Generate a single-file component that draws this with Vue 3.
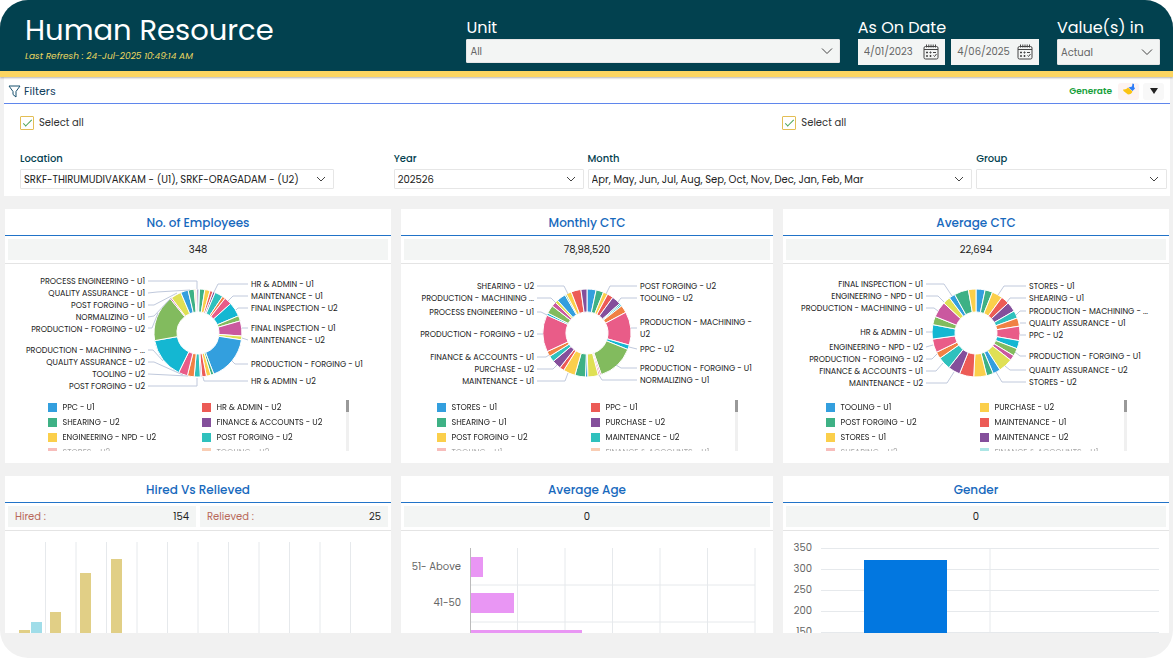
<script setup>
import { ref } from "vue";

const unit = ref("All");
const valuesIn = ref("Actual");
const dates = ref([
  { id: "date-from", hint: "Start date", value: "4/01/2023" },
  { id: "date-to", hint: "End date", value: "4/06/2025" },
]);
const allLocations = ref(true);
const allMonths = ref(true);

const filters = ref([
  { id: "location", label: "Location", value: "SRKF-THIRUMUDIVAKKAM - (U1), SRKF-ORAGADAM - (U2)" },
  { id: "year", label: "Year", value: "202526" },
  { id: "month", label: "Month", value: "Apr, May, Jun, Jul, Aug, Sep, Oct, Nov, Dec, Jan, Feb, Mar" },
  { id: "group", label: "Group", value: "" },
]);

const colors = {
  blue: "#339fde",
  green: "#3eb185",
  yellow: "#fbcf4b",
  red: "#ec5b56",
  purple: "#844f9b",
  teal: "#2fc1bd",
  orange: "#f08143",
  pink: "#e95c88",
  cyan: "#14b7d2",
  leaf: "#82bb5e",
  magenta: "#ca589f",
  lime: "#dfe055",
};

// slices: [color, end angle], clockwise from the top
// labels: [text, y, leader line points], the centre of the ring is 0,0
const donuts = [
  {
    title: "No. of Employees",
    total: "348",
    slices: [
      ["blue", 2], ["green", 9], ["yellow", 16], ["red", 20], ["purple", 23], ["teal", 34],
      ["orange", 38], ["pink", 48], ["cyan", 67], ["leaf", 74], ["magenta", 94], ["lime", 99],
      ["blue", 159], ["green", 163], ["yellow", 169], ["red", 175], ["purple", 177], ["teal", 185],
      ["orange", 194], ["pink", 206], ["cyan", 260], ["leaf", 321], ["magenta", 323], ["lime", 337],
      ["blue", 347], ["green", 355], ["yellow", 357], ["red", 358], ["purple", 360],
    ],
    left: [
      ["PROCESS ENGINEERING - U1", -52, "-50,-52 -1,-52 -1,-44"],
      ["QUALITY ASSURANCE - U1", -40, "-50,-40 -41,-41 -8,-43"],
      ["POST FORGING - U1", -28, "-50,-28 -44,-28 -21,-40"],
      ["NORMALIZING - U1", -16, "-50,-16 -44,-17 -27,-35"],
      ["PRODUCTION - FORGING - U2", -4, "-50,-5 -46,-5 -40,-20"],
      ["PRODUCTION - MACHINING - ...", 17, "-50,17 -45,17 -35,28"],
      ["QUALITY ASSURANCE - U2", 29, "-50,29 -44,29 -15,42"],
      ["TOOLING - U2", 41, "-50,41 -10,43"],
      ["POST FORGING - U2", 53, "-50,53 -1,53 -1,45"],
    ],
    right: [
      ["HR & ADMIN - U1", -49, "50,-49 20,-49 16,-41"],
      ["MAINTENANCE - U1", -37, "50,-37 35,-37 30,-32"],
      ["FINAL INSPECTION - U2", -25, "50,-25 40,-25 38,-23"],
      ["FINAL INSPECTION - U1", -5, "50,-5 44,-5"],
      ["MAINTENANCE - U2", 7, "50,7 44,5"],
      ["PRODUCTION - FORGING - U1", 31, "50,31 37,31 34,28"],
      ["HR & ADMIN - U2", 48, "50,48 6,48 5,44"],
    ],
    legend: [
      ["blue", "PPC - U1"], ["red", "HR & ADMIN - U2"],
      ["green", "SHEARING - U2"], ["purple", "FINANCE & ACCOUNTS - U2"],
      ["yellow", "ENGINEERING - NPD - U2"], ["teal", "POST FORGING - U2"],
      ["red", "STORES - U2"], ["orange", "TOOLING - U2"],
    ],
  },
  {
    title: "Monthly CTC",
    total: "78,98,520",
    slices: [
      ["blue", 12], ["green", 22], ["yellow", 28], ["red", 36], ["purple", 48], ["teal", 50],
      ["cyan", 52], ["orange", 62], ["pink", 106], ["cyan", 112], ["leaf", 161], ["magenta", 163],
      ["pink", 165], ["lime", 179], ["blue", 182], ["green", 196], ["yellow", 212], ["red", 218],
      ["purple", 230], ["teal", 238], ["orange", 245], ["pink", 294], ["cyan", 297], ["leaf", 308],
      ["magenta", 314], ["lime", 318], ["blue", 330], ["green", 332], ["yellow", 339], ["red", 352],
      ["purple", 360],
    ],
    left: [
      ["SHEARING - U2", -47, "-50,-47 -23,-47 -19,-39"],
      ["PRODUCTION - MACHINING ...", -35, "-50,-35 -36,-35 -31,-30"],
      ["PROCESS ENGINEERING - U1", -21, "-50,-21 -46,-21 -40,-18"],
      ["PRODUCTION - FORGING - U2", 1, "-50,1 -44,1"],
      ["FINANCE & ACCOUNTS - U1", 24, "-50,24 -41,24 -38,22"],
      ["PURCHASE - U2", 36, "-50,36 -34,36 -30,32"],
      ["MAINTENANCE - U1", 48, "-50,48 -22,48 -19,40"],
    ],
    right: [
      ["POST FORGING - U2", -47, "50,-47 23,-47 19,-39"],
      ["TOOLING - U2", -35, "50,-35 34,-35 31,-31"],
      ["PRODUCTION - MACHINING -", -11, "50,-5 44,-5"],
      ["U2", 1, ""],
      ["PPC - U2", 16, "50,16 42,14"],
      ["PRODUCTION - FORGING - U1", 35, "50,35 34,35 29,32"],
      ["NORMALIZING - U1", 47, "50,47 15,47 12,42"],
    ],
    legend: [
      ["blue", "STORES - U1"], ["red", "PPC - U1"],
      ["green", "SHEARING - U1"], ["purple", "PURCHASE - U2"],
      ["yellow", "POST FORGING - U2"], ["teal", "MAINTENANCE - U2"],
      ["red", "TOOLING - U1"], ["orange", "FINANCE & ACCOUNTS - U1"],
    ],
  },
  {
    title: "Average CTC",
    total: "22,694",
    slices: [
      ["blue", 12], ["green", 22], ["yellow", 36], ["red", 47], ["purple", 60], ["teal", 70],
      ["orange", 81], ["pink", 100], ["cyan", 111], ["leaf", 121], ["magenta", 128], ["lime", 147],
      ["blue", 157], ["green", 166], ["yellow", 183], ["red", 202], ["purple", 218], ["teal", 235],
      ["orange", 244], ["pink", 262], ["cyan", 281], ["leaf", 292], ["magenta", 313], ["lime", 323],
      ["blue", 331], ["green", 350], ["yellow", 360],
    ],
    left: [
      ["FINAL INSPECTION - U1", -49, "-50,-49 -32,-49 -24,-37"],
      ["ENGINEERING - NPD - U1", -37, "-50,-37 -38,-37 -32,-31"],
      ["PRODUCTION - MACHINING - U1", -25, "-50,-25 -42,-25 -38,-22"],
      ["HR & ADMIN - U1", -1, "-50,-1 -44,-1"],
      ["ENGINEERING - NPD - U2", 14, "-50,14 -43,12"],
      ["PRODUCTION - FORGING - U2", 26, "-50,26 -44,26 -39,21"],
      ["FINANCE & ACCOUNTS - U1", 38, "-50,38 -40,38 -33,30"],
      ["MAINTENANCE - U2", 50, "-50,50 -29,50 -22,39"],
    ],
    right: [
      ["STORES - U1", -47, "50,-47 28,-47 22,-38"],
      ["SHEARING - U1", -35, "50,-35 34,-35 31,-31"],
      ["PRODUCTION - MACHINING - ...", -22, "50,-22 44,-22 40,-18"],
      ["QUALITY ASSURANCE - U1", -10, "50,-10 44,-10"],
      ["PPC - U2", 2, "50,2 44,2"],
      ["PRODUCTION - FORGING - U1", 23, "50,23 44,23 39,19"],
      ["QUALITY ASSURANCE - U2", 37, "50,37 34,37 29,33"],
      ["STORES - U2", 49, "50,49 26,49 20,39"],
    ],
    legend: [
      ["blue", "TOOLING - U1"], ["yellow", "PURCHASE - U2"],
      ["green", "POST FORGING - U2"], ["red", "MAINTENANCE - U1"],
      ["yellow", "STORES - U1"], ["purple", "MAINTENANCE - U2"],
      ["red", "SHEARING - U2"], ["teal", "FINANCE & ACCOUNTS - U1"],
    ],
  },
];

const point = (angle, radius) => {
  const rad = (angle * Math.PI) / 180;
  return `${(Math.sin(rad) * radius).toFixed(2)} ${(-Math.cos(rad) * radius).toFixed(2)}`;
};

const slicePath = (slices, i) => {
  const start = i ? slices[i - 1][1] : 0;
  const end = slices[i][1];
  return `M${point(start, 44)}A44 44 0 0 1 ${point(end, 44)}L${point(end, 21)}A21 21 0 0 0 ${point(start, 21)}Z`;
};

const hiredBars = [
  { x: 14, y: 99, color: "#e1cf86" },
  { x: 26, y: 91, color: "#a0dde9" },
  { x: 45, y: 81, color: "#e1cf86" },
  { x: 75, y: 42, color: "#e1cf86" },
  { x: 106, y: 28, color: "#e1cf86" },
];
const ageBars = [
  { label: "51- Above", y: 26, width: 13 },
  { label: "41-50", y: 62, width: 44 },
  { label: "31-40", y: 99, width: 112 },
];
const headcounts = [350, 300, 250, 200, 150];
</script>

<template>
  <div class="shell">
    <header class="topbar">
      <div>
        <h1>Human Resource</h1>
        <p class="refresh">Last Refresh : 24-Jul-2025 10:49:14 AM</p>
      </div>
      <div class="top-field unit">
        <label for="unit">Unit</label>
        <div class="select-box">
          <select id="unit" v-model="unit"><option>All</option></select>
          <svg viewBox="0 0 12 12"><path d="M1 3.5 6 8.5 11 3.5" /></svg>
        </div>
      </div>
      <div class="top-field">
        <label for="date-from">As On Date</label>
        <div class="dates">
          <div v-for="date in dates" :key="date.id" class="date-box">
            <input :id="date.id" v-model="date.value" type="text" :aria-label="date.hint" />
            <button type="button" aria-label="Open calendar">
              <svg viewBox="0 0 16 16">
                <path d="M2.5 2.5h11Q15 2.5 15 4v9.5q0 1.5-1.5 1.5h-11Q1 15 1 13.5V4q0-1.500 1.5-1.500ZM1 5.5h14" />
                <path d="M3.5 .5v3M5.8 .5v3M8 .5v3M10.2 .5v3M12.5 .5v3" />
                <path d="M3.5 8h1v1h-1zM7 8h1v1H7zM10 8.500h3M3.500 11.500h1v1h-1zM7 11.500h1v1H7zM10.500 11.500l1 1 2-2.500" />
              </svg>
            </button>
          </div>
        </div>
      </div>
      <div class="top-field">
        <label for="values-in">Value(s) in</label>
        <div class="select-box">
          <select id="values-in" v-model="valuesIn"><option>Actual</option></select>
          <svg viewBox="0 0 12 12"><path d="M1 3.5 6 8.5 11 3.5" /></svg>
        </div>
      </div>
    </header>

    <section class="filters">
      <div class="filters-head">
        <svg class="funnel" viewBox="0 0 13 13"><path d="M1 1h11L8 6.5V12L5 9.5v-3Z" /></svg>
        <h2>Filters</h2>
        <button type="button" class="generate">Generate</button>
        <button type="button" class="clear" aria-label="Clear filters">
          <svg viewBox="0 0 14 14">
            <path d="M10.500 .5 12 1v3l1 1.500L10.500 8 6.500 4.500 10 3.500Z" fill="#2f7df6" />
            <path d="M6 4.500 10.500 8.500Q9.500 11.500 6 11.500L1.500 8 1 6.500Q4 7 6 4.500Z" fill="#fbc312" />
          </svg>
        </button>
        <button type="button" class="collapse" aria-label="Collapse">
          <svg viewBox="0 0 8 6"><path d="M0 0h8L4 6Z" /></svg>
        </button>
      </div>
      <div class="checks">
        <label><input v-model="allLocations" type="checkbox" />Select all</label>
        <label><input v-model="allMonths" type="checkbox" />Select all</label>
      </div>
      <div class="fields">
        <div v-for="filter in filters" :key="filter.id" class="field" :class="filter.id">
          <label :for="filter.id">{{ filter.label }}</label>
          <div class="select-box">
            <select :id="filter.id"><option>{{ filter.value }}</option></select>
            <svg viewBox="0 0 12 12"><path d="M2 4 6 8 10 4" /></svg>
          </div>
        </div>
      </div>
    </section>

    <main class="cards">
      <article v-for="chart in donuts" :key="chart.title" class="card">
        <h3>{{ chart.title }}</h3>
        <div class="totals"><p class="total">{{ chart.total }}</p></div>
        <svg class="donut" viewBox="-186 -69 372 130">
          <path
            v-for="(slice, i) in chart.slices"
            :key="i"
            class="slice"
            :d="slicePath(chart.slices, i)"
            :fill="colors[slice[0]]"
          />
          <g v-for="label in chart.left" :key="label[0]">
            <polyline :points="label[2]" />
            <text x="-53" :y="label[1] + 3" text-anchor="end">{{ label[0] }}</text>
          </g>
          <g v-for="label in chart.right" :key="label[0]">
            <polyline :points="label[2]" />
            <text x="53" :y="label[1] + 3">{{ label[0] }}</text>
          </g>
        </svg>
        <div class="legend">
          <ul>
            <li v-for="item in chart.legend" :key="item[1]">
              <i :style="{ background: colors[item[0]] }"></i>{{ item[1] }}
            </li>
          </ul>
          <div class="scrollbar"><span></span></div>
        </div>
      </article>

      <article class="card">
        <h3>Hired Vs Relieved</h3>
        <div class="totals">
          <p class="total pair"><span>Hired :</span>154</p>
          <p class="total pair"><span>Relieved :</span>25</p>
        </div>
        <svg class="bars" viewBox="0 0 386 200">
          <line v-for="n in 11" :key="n" :x1="10 + n * 30.5" :x2="10 + n * 30.5" y1="11" y2="190" />
          <rect v-for="bar in hiredBars" :key="bar.x" :x="bar.x" :y="bar.y" width="11" :height="190 - bar.y" :fill="bar.color" />
        </svg>
      </article>

      <article class="card">
        <h3>Average Age</h3>
        <div class="totals"><p class="total">0</p></div>
        <svg class="bars" viewBox="0 0 372 200">
          <line v-for="n in 6" :key="n" :x1="69 + n * 47.5" :x2="69 + n * 47.5" y1="17" y2="190" />
          <line v-for="n in 4" :key="'h' + n" x1="69" x2="354" :y1="17 + n * 37" :y2="17 + n * 37" />
          <g v-for="bar in ageBars" :key="bar.label">
            <rect x="69" :y="bar.y" :width="bar.width" height="20" fill="#e996f4" />
            <text x="60" :y="bar.y + 13" text-anchor="end">{{ bar.label }}</text>
          </g>
          <line class="axis" x1="69.5" x2="69.5" y1="17" y2="190" />
        </svg>
      </article>

      <article class="card">
        <h3>Gender</h3>
        <div class="totals"><p class="total">0</p></div>
        <svg class="bars" viewBox="0 0 386 200">
          <g v-for="(count, i) in headcounts" :key="count">
            <line x1="38" x2="376" :y1="17.5 + i * 21" :y2="17.5 + i * 21" />
            <text x="29" :y="20 + i * 21" text-anchor="end">{{ count }}</text>
          </g>
          <line x1="207" x2="207" y1="17" y2="190" />
          <rect x="81" y="29" width="83" height="161" fill="#0277e0" />
        </svg>
      </article>
    </main>
  </div>
</template>

<style>
body {
  background: #fff;
}
</style>

<style scoped>
.shell {
  display: flex;
  flex-direction: column;
  height: 100vh;
  margin-right: 1px;
  padding-bottom: 25px;
  box-sizing: border-box;
  overflow: hidden;
  border-radius: 28px;
  background: #f1f1f1;
  color: #222;
  font-family: Poppins, Inter, "Open Sans", sans-serif;
  font-size: 10px;
}
h1,
h2,
h3,
p,
ul {
  margin: 0;
  padding: 0;
}
button,
input,
select {
  font: inherit;
  color: inherit;
  border: 0;
  padding: 0;
  background: none;
}
.topbar {
  flex: none;
  display: grid;
  grid-template-columns: minmax(0, 423fr) minmax(0, 373fr) minmax(0, 181fr) minmax(0, 103fr);
  column-gap: 18px;
  height: 71px;
  padding: 0 13px 0 25px;
  background: #02414f;
  border-bottom: 6px solid #fbd561;
  box-shadow: 0 1px 2px rgba(0, 0, 0, 0.3);
  position: relative;
  color: #fff;
}
h1 {
  margin-top: 12px;
  font-size: 29px;
  line-height: 36px;
  font-weight: 400;
}
.refresh {
  font-size: 9px;
  line-height: 17px;
  font-style: italic;
  color: #ecd75f;
}
.top-field label {
  display: block;
  padding-top: 17px;
  font-size: 16px;
  line-height: 22px;
}
.select-box {
  position: relative;
}
.select-box select {
  display: block;
  appearance: none;
  width: 100%;
  height: 20px;
  padding: 0 24px 0 3px;
  border: 1px solid #e6e6e6;
  border-radius: 1px;
  background: #fff;
  box-sizing: border-box;
}
.select-box svg {
  position: absolute;
  right: 7px;
  top: 50%;
  width: 12px;
  height: 12px;
  transform: translateY(-50%);
  fill: none;
  stroke: #444;
  pointer-events: none;
}
.topbar .select-box select,
.date-box {
  height: 26px;
  background: #f3f5f4;
  color: #666;
}
.topbar .unit .select-box select {
  height: 24px;
}
.dates {
  display: grid;
  grid-template-columns: 1fr 1fr;
  gap: 6px;
}
.date-box {
  display: flex;
  align-items: center;
  min-width: 0;
  padding: 0 6px;
}
.date-box input {
  flex: 1;
  width: 0;
  min-width: 0;
}
.date-box button {
  width: 16px;
  height: 16px;
}
.date-box svg {
  display: block;
  fill: none;
  stroke: #444;
}
.filters {
  flex: none;
  margin: 0 3px 0 4px;
  height: 119px;
  background: #fff;
}
.filters-head {
  display: flex;
  align-items: center;
  height: 24px;
  padding: 2px 6px 0 4px;
  border-bottom: 1px solid #5f86ec;
}
.funnel {
  width: 13px;
  height: 13px;
  fill: none;
  stroke: #17506e;
}
h2 {
  flex: 1;
  margin-left: 3px;
  font-size: 11px;
  font-weight: 400;
  color: #12405e;
}
.generate {
  margin-right: 6px;
  font-size: 9px;
  font-weight: 600;
  color: #16a03a;
}
.clear,
.collapse {
  display: flex;
  align-items: center;
  justify-content: center;
  width: 21px;
  height: 17px;
  border-radius: 3px;
  background: #fdf3f2;
}
.clear {
  align-items: flex-start;
  margin-right: 4px;
}
.clear svg {
  width: 14px;
  height: 14px;
}
.collapse {
  background: #f8f8f8;
}
.collapse svg {
  width: 8px;
  height: 6px;
  fill: #222;
}
.checks {
  display: grid;
  grid-template-columns: 763fr 385fr;
  padding: 11px 3px 0 16px;
}
.checks label {
  display: flex;
  align-items: center;
  gap: 5px;
  line-height: 16px;
  color: #333;
}
.checks input {
  appearance: none;
  display: grid;
  place-items: center;
  width: 14px;
  height: 14px;
  margin: 0;
  border: 1px solid #e3be55;
  border-radius: 1px;
}
.checks input:checked::before {
  content: "";
  width: 8px;
  height: 3px;
  border: solid #4aa356;
  border-width: 0 0 1px 1px;
  transform: translateY(-1px) rotate(-45deg);
}
.fields {
  display: grid;
  grid-template-columns: 370fr 190fr 385fr 191fr;
  gap: 4px;
  padding: 19px 3px 0 16px;
}
.field label {
  display: block;
  line-height: 18px;
  margin-bottom: 1px;
  font-weight: 500;
  color: #02414f;
}
.location .select-box {
  width: 85%;
}
.cards {
  flex: 1;
  min-height: 0;
  display: grid;
  grid-template-columns: 386fr 372fr 386fr;
  align-content: start;
  gap: 13px 10px;
  overflow: hidden;
  padding: 13px 4px 0 5px;
}
.card {
  height: 254px;
  background: #fff;
  overflow: hidden;
}
h3 {
  height: 26px;
  line-height: 27px;
  border-bottom: 1px solid #2173c8;
  font-size: 12px;
  font-weight: 500;
  text-align: center;
  color: #1769bd;
}
.totals {
  display: flex;
  gap: 4px;
  padding: 3px;
  border-bottom: 1px solid #e4e4e4;
}
.total {
  flex: 1;
  line-height: 21px;
  text-align: center;
  background: #f3f5f4;
}
.pair {
  display: flex;
  justify-content: space-between;
  padding: 0 7px;
}
.pair span {
  color: #b8695a;
}
.donut {
  display: block;
  width: 100%;
  height: 130px;
}
.slice {
  stroke: #fff;
  stroke-width: 1;
}
.donut polyline {
  fill: none;
  stroke: #c0c9dc;
}
.donut text {
  font-size: 8px;
  fill: #222;
}
.legend {
  display: flex;
  justify-content: space-between;
  width: 301px;
  height: 51px;
  margin: 6px auto 0;
  overflow: hidden;
}
.legend ul {
  display: grid;
  grid-template-columns: 154px 1fr;
  grid-auto-rows: 15px;
  list-style: none;
  mask-image: linear-gradient(#000 45px, rgba(0, 0, 0, 0.4) 46px);
}
.legend li {
  display: flex;
  align-items: center;
  gap: 6px;
  font-size: 8px;
  white-space: nowrap;
}
.legend i {
  width: 9px;
  height: 9px;
}
.scrollbar {
  width: 3px;
  background: #f0f0f0;
}
.scrollbar span {
  display: block;
  height: 12px;
  background: #999;
}
.bars {
  display: block;
  width: 100%;
}
.bars line {
  stroke: #e6e9ec;
}
.bars .axis {
  stroke: #bbb;
}
.bars text {
  font-size: 10px;
  fill: #666;
}
</style>
